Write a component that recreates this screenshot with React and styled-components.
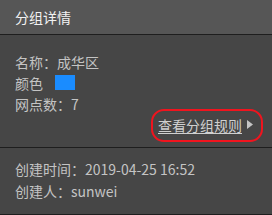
import styled, { createGlobalStyle } from "styled-components";

const Global = createGlobalStyle`
  html, body { margin: 0; padding: 0; background: #464646; }
  body {
    font-family: "Microsoft YaHei", "Noto Sans CJK SC", "Noto Sans", sans-serif;
  }
`;

const Panel = styled.div`
  width: 272px;
  background: #464646;
  border-bottom: 1px solid #1e1e1e;
  color: #c4c4c4;
  font-size: 14px;
`;

const Header = styled.div`
  height: 34px;
  display: flex;
  align-items: center;
  padding: 0 15px;
  background: #565656;
  border-bottom: 1px solid #1e1e1e;
  color: #f2f2f2;
  font-size: 14px;
`;

const Section = styled.div`
  display: flex;
  flex-direction: column;
  padding: ${(p) => p.$pad};
  border-top: ${(p) => (p.$divider ? "1px solid #1e1e1e" : "none")};
`;

const Row = styled.div`
  display: flex;
  align-items: center;
  height: ${(p) => p.$h || 21}px;
  padding-left: 15px;
  white-space: nowrap;
`;

const Swatch = styled.span`
  display: inline-block;
  width: 20px;
  height: 15px;
  margin-left: 12px;
  background: ${(p) => p.$color};
`;

const LinkRow = styled.div`
  display: flex;
  justify-content: flex-end;
  align-items: center;
  height: 21px;
  padding-right: 19px;
`;

const RuleLink = styled.a`
  position: relative;
  display: flex;
  align-items: center;
  gap: 5px;
  color: #d0d0d0;
  cursor: pointer;

  &::after {
    content: "";
    position: absolute;
    left: -7px;
    right: -10px;
    top: -6px;
    bottom: -7px;
    border: 2px solid #f0141e;
    border-radius: 13px;
  }
`;

const LinkText = styled.span`
  text-decoration: underline;
  text-underline-offset: 2px;
`;

export default function App() {
  return (
    <>
      <Global />
      <Panel>
        <Header>分组详情</Header>
        <Section $pad="16px 0 12px">
          <Row>名称：成华区</Row>
          <Row>
            颜色
            <Swatch $color="#1a8cff" />
          </Row>
          <Row>网点数：7</Row>
          <LinkRow>
            <RuleLink>
              <LinkText>查看分组规则</LinkText>
              <svg width="6" height="9" viewBox="0 0 6 9">
                <path d="M0 0 L6 4.5 L0 9 Z" fill="#c4c4c4" />
              </svg>
            </RuleLink>
          </LinkRow>
        </Section>
        <Section $divider $pad="10px 0 12px">
          <Row $h={22}>创建时间：2019-04-25 16:52</Row>
          <Row $h={22}>创建人：sunwei</Row>
        </Section>
      </Panel>
    </>
  );
}
